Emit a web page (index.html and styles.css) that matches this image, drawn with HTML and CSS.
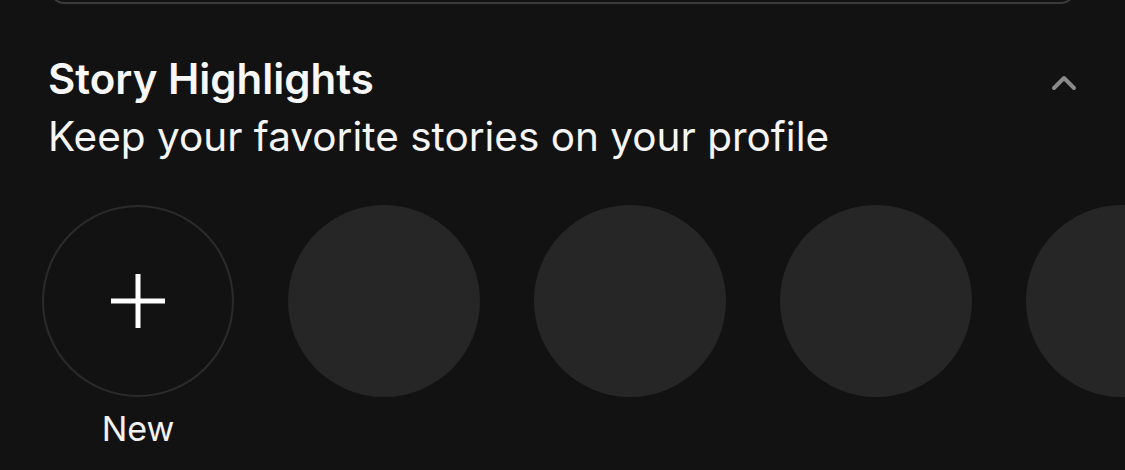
FILE: index.html
```html
<!DOCTYPE html>
<html lang="en">
<head>
    <meta charset="UTF-8">
    <meta name="viewport" content="width=device-width, initial-scale=1.0">
    <title>Story Highlights</title>
    <link rel="stylesheet" href="styles.css">
</head>
<body>
    <div class="screen">
        <!-- Bottom edge of the bio box above -->
        <div class="bio-box"></div>

        <!-- Story Highlights Section -->
        <section class="highlights">
            <div class="highlights-head">
                <div>
                    <h2>Story Highlights</h2>
                    <p>Keep your favorite stories on your profile</p>
                </div>
                <svg class="chevron" width="28" height="18" viewBox="0 0 28 18">
                    <path d="M4 13 L14 3 L24 13" fill="none" stroke="#8a8a8a" stroke-width="4" stroke-linecap="round" stroke-linejoin="round"/>
                </svg>
            </div>

            <div class="highlight-list">
                <div class="highlight">
                    <div class="bubble new">
                        <svg width="56" height="56" viewBox="0 0 56 56">
                            <path d="M28 1 V55 M1 28 H55" stroke="#fff" stroke-width="5"/>
                        </svg>
                    </div>
                    <span>New</span>
                </div>
                <div class="highlight"><div class="bubble"></div></div>
                <div class="highlight"><div class="bubble"></div></div>
                <div class="highlight"><div class="bubble"></div></div>
                <div class="highlight"><div class="bubble"></div></div>
            </div>
        </section>
    </div>
</body>
</html>
```

FILE: styles.css
```css
/* Basic Reset */
* {
    box-sizing: border-box;
    margin: 0;
    padding: 0;
}

body {
    font-family: Inter, "Noto Sans", Arial, sans-serif;
    background: #121212;
    color: #f5f5f5;
    width: 1125px;
    height: 470px;
    overflow: hidden;
}

.screen {
    overflow: hidden;
    height: 470px;
}

/* Bio box edge */
.bio-box {
    height: 24px;
    margin: -20px 50px 0 50px;
    border: 2px solid #3a3a3a;
    border-top: none;
    border-radius: 0 0 14px 14px;
}

/* Highlights */
.highlights {
    padding-top: 50px;
}

.highlights-head {
    display: flex;
    justify-content: space-between;
    align-items: flex-start;
    padding: 0 47px 0 48px;
}

.highlights-head h2 {
    font-size: 42px;
    font-weight: 600;
    line-height: 50px;
    letter-spacing: 0;
    color: #f7f7f7;
}

.highlights-head p {
    font-size: 40.5px;
    font-weight: 400;
    line-height: 50px;
    margin-top: 8px;
    color: #f5f5f5;
}

.chevron {
    margin-top: 21px;
}

.highlight-list {
    display: flex;
    gap: 54px;
    padding: 43px 0 0 42px;
}

.highlight {
    display: flex;
    flex-direction: column;
    align-items: center;
    flex-shrink: 0;
}

.bubble {
    width: 192px;
    height: 192px;
    border-radius: 50%;
    background: #262626;
    display: flex;
    align-items: center;
    justify-content: center;
}

.bubble.new {
    background: transparent;
    border: 2px solid #2b2b2b;
}

.highlight span {
    font-size: 34px;
    margin-top: 12px;
    line-height: 40px;
    color: #f2f2f2;
}
```
